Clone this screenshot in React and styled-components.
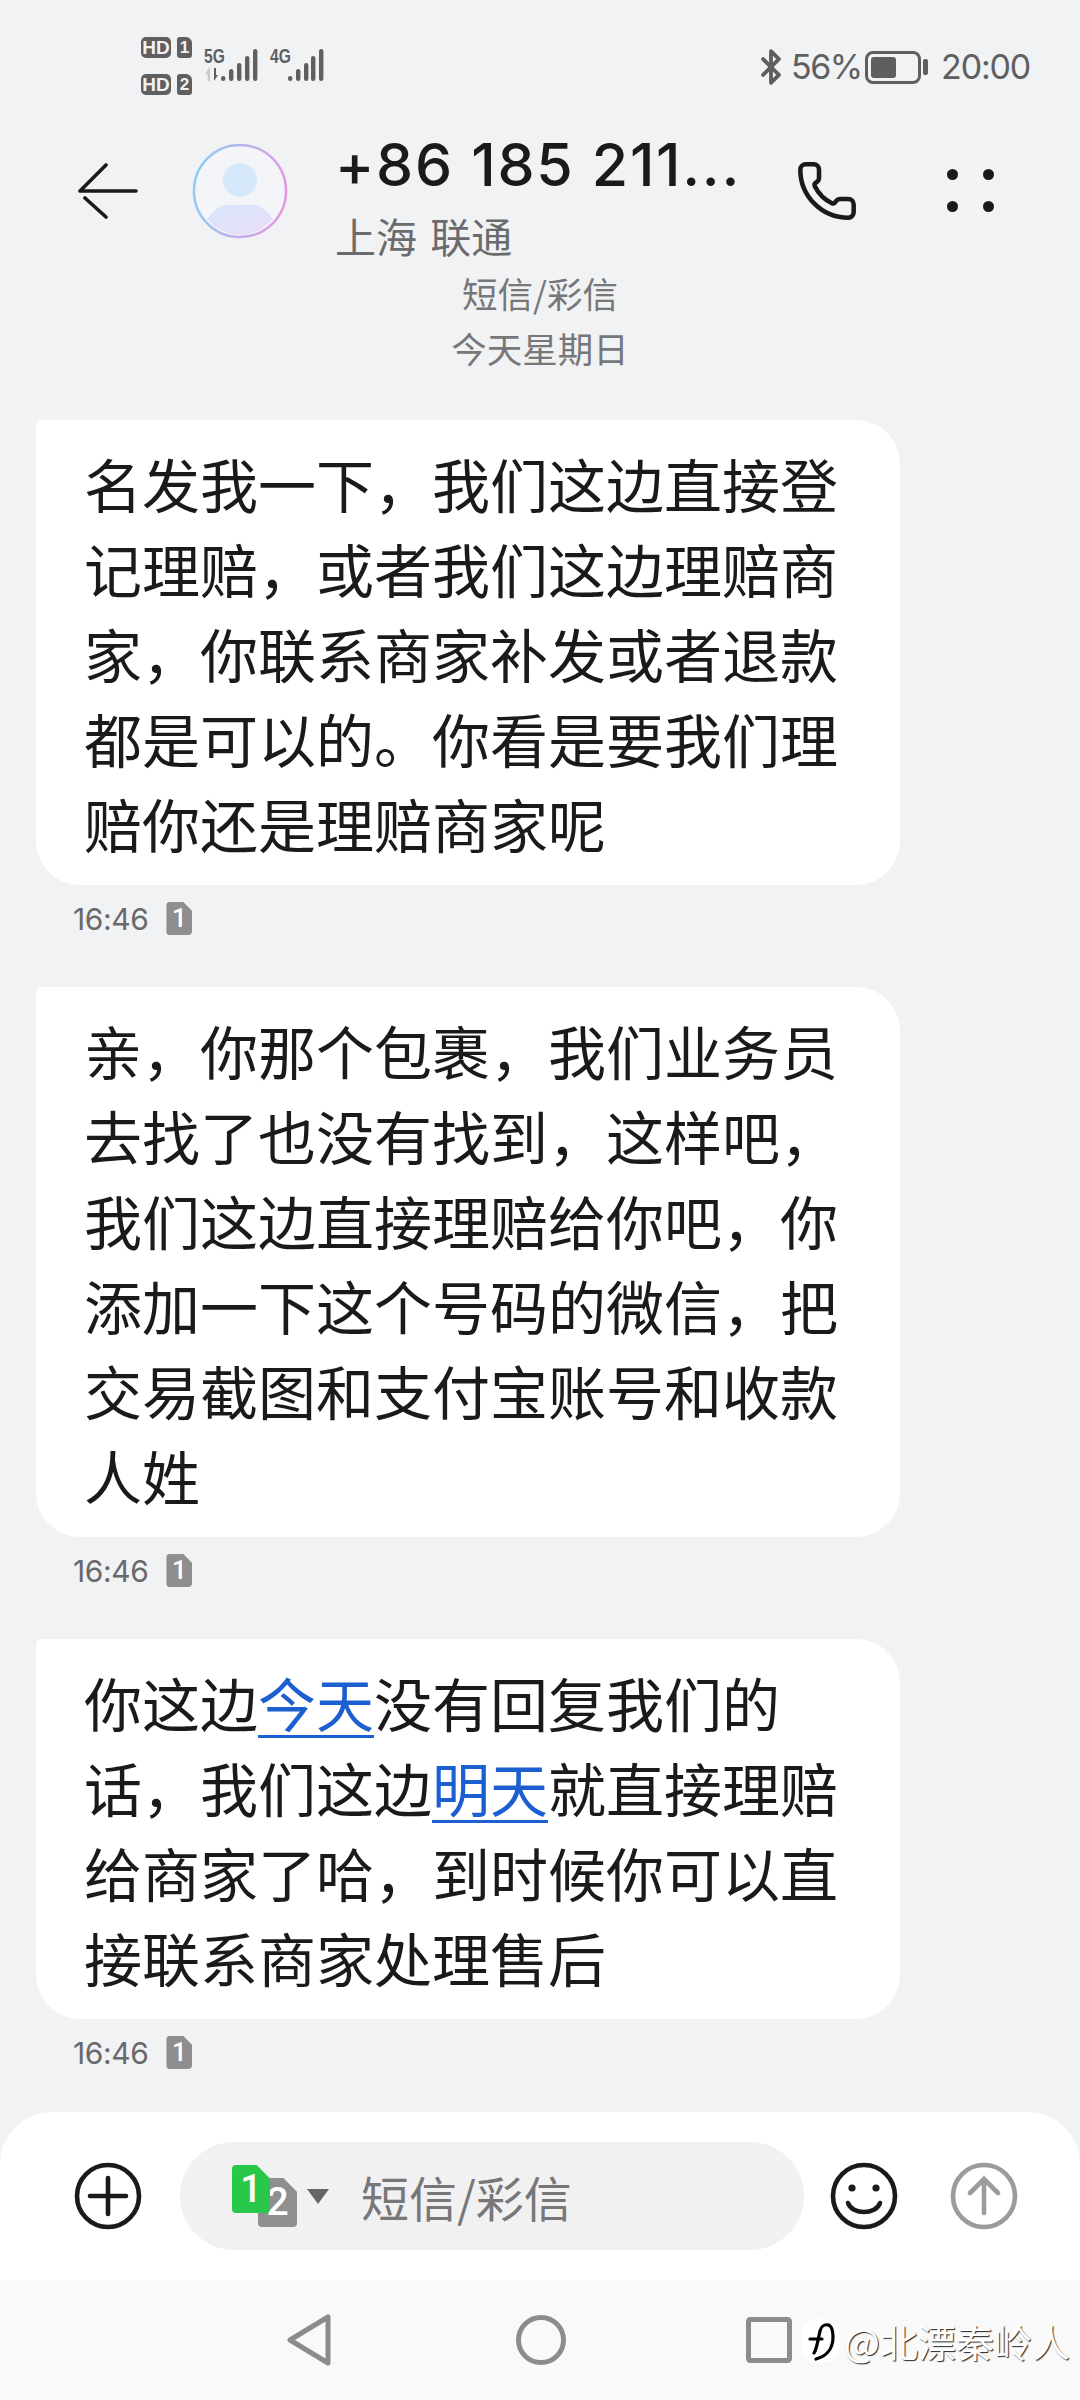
import React from 'react'
import styled, { createGlobalStyle } from 'styled-components'
import { Phone, Bluetooth } from 'lucide-react'

const Global = createGlobalStyle`
	html, body {
		margin: 0;
		padding: 0;
		background: #f1f2f4;
	}
	* {
		box-sizing: border-box;
	}
`

const CJK = `"Noto Sans CJK SC", "Noto Sans", sans-serif`
const LATIN = `Inter, Roboto, "Noto Sans CJK SC", sans-serif`

const Page = styled.div`
	position: relative;
	width: 1080px;
	height: 2400px;
	display: flex;
	flex-direction: column;
	background: #f1f2f4;
	overflow: hidden;
`

const StatusBar = styled.div`
	flex: none;
	height: 129px;
	padding: 37px 50px 0 141px;
	display: flex;
	align-items: flex-start;
`

const HdStack = styled.div`
	display: flex;
	flex-direction: column;
	gap: 16px;
`

const HdRow = styled.div`
	display: flex;
	gap: 6px;
`

const HdTag = styled.div`
	width: 30px;
	height: 21px;
	border-radius: 5px;
	background: #5f5f61;
	color: #f1f2f4;
	font: 700 19px/21px "Liberation Sans", sans-serif;
	text-align: center;
`

const HdSlot = styled(HdTag)`
	width: 15px;
	font-size: 17px;
	border-radius: 3px 6px 3px 3px;
`

const Network = styled.div`
	position: relative;
	margin-top: 11px;
	margin-left: 12px;
	display: flex;
	align-items: flex-end;
	height: 34px;
	padding-left: ${(p) => (p.$wide ? '18px' : '0')};
`

const NetLabel = styled.div`
	position: absolute;
	left: 0;
	top: -1px;
	font: 700 20px/18px "Liberation Sans", sans-serif;
	transform: scaleX(0.78);
	transform-origin: left;
	color: #5f5f61;
`

const StatusRight = styled.div`
	margin-left: auto;
	display: flex;
	align-items: center;
	height: 60px;
	color: #5f5f61;
`

const Percent = styled.div`
	font: 400 34px/40px ${LATIN};
	margin-left: 1px;
	letter-spacing: -1.5px;
	width: 74px;
`

const Battery = styled.div`
	width: 56px;
	height: 33px;
	border: 3px solid #5f5f61;
	border-radius: 8px;
	padding: 3px;
`

const BatteryFill = styled.div`
	width: 25px;
	height: 100%;
	background: #5f5f61;
	border-radius: 3px;
`

const BatteryNub = styled.div`
	width: 5px;
	height: 16px;
	margin-left: 2px;
	background: #5f5f61;
	border-radius: 2px;
`

const Clock = styled.div`
	font: 400 34px/40px ${LATIN};
	margin-left: 13px;
	letter-spacing: -1.2px;
`

const Header = styled.div`
	flex: none;
	height: 130px;
	padding-left: 78px;
	display: flex;
	align-items: center;
`

const BackIcon = styled.svg`
	flex: none;
	fill: none;
	stroke: #1a1a1a;
	stroke-width: 3.6;
	stroke-linecap: round;
	stroke-linejoin: round;
	margin-top: -6px;
`

const Avatar = styled.svg`
	flex: none;
	margin-left: 54px;
	margin-top: -6px;
`

const Contact = styled.div`
	margin-left: 47px;
	width: 460px;
	margin-top: 8px;
`

const Name = styled.div`
	font: 500 59px/66px ${LATIN};
	color: #1a1a1a;
	letter-spacing: 1.7px;
	white-space: nowrap;
	margin-top: 3px;
`

const Carrier = styled.div`
	font: 400 41px/64px ${CJK};
	color: #6b6b6d;
	word-spacing: 4px;
	white-space: nowrap;
	margin-top: 5px;
`

const CallIcon = styled(Phone)`
	flex: none;
	margin-top: -6px;
`

const MoreDots = styled.div`
	display: grid;
	grid-template-columns: 11px 11px;
	gap: 21px 25px;
	margin-left: 88px;
	margin-top: -8px;
`

const Dot = styled.span`
	width: 11px;
	height: 11px;
	border-radius: 50%;
	background: #1a1a1a;
`

const DayLabels = styled.div`
	flex: none;
	height: 161px;
	padding-top: 6px;
	text-align: center;
	font: 400 35.5px/55px ${CJK};
	color: #77777a;
`

const Thread = styled.div`
	padding-left: 36px;
	flex: 1;
	min-height: 0;
`

const Message = styled.div`
	margin-bottom: 51px;
`

const Bubble = styled.div`
	width: 864px;
	padding: 21px 0 19px 48px;
	background: #fff;
	border-radius: 6px 44px 44px 44px;
`

const Line = styled.div`
	font: 400 58px/85px ${CJK};
	color: #1a1a1a;
	white-space: nowrap;
`

const Link = styled.span`
	color: #1c5fd1;
	text-decoration: underline;
	text-decoration-thickness: 3px;
	text-underline-offset: 8px;
`

const Meta = styled.div`
	height: 51px;
	padding: 16px 0 0 37px;
	display: flex;
	align-items: center;
	gap: 18px;
`

const Time = styled.div`
	font: 400 30px/34px ${LATIN};
	color: #69696b;
	letter-spacing: -0.4px;
`

const SimBadge = styled.div`
	position: relative;
	z-index: ${(p) => (p.$front ? 1 : 0)};
	width: ${(p) => p.$size}px;
	height: ${(p) => Math.round(p.$size * 1.25)}px;
	border-radius: 4px;
	background: ${(p) => p.$color};
	clip-path: polygon(0 0, 65% 0, 100% 28%, 100% 100%, 0 100%);
	color: #fff;
	font: 500 ${(p) => Math.round(p.$size * 1)}px/${(p) => Math.round(p.$size * 1.25)}px Roboto, sans-serif;
	text-align: center;
`

const Composer = styled.div`
	flex: none;
	height: 168px;
	padding: 0 0 0 74px;
	display: flex;
	align-items: center;
	background: #fff;
	border-radius: 52px 52px 0 0;
`

const RoundIcon = styled.svg`
	flex: none;
	fill: none;
	stroke: ${(p) => p.$color};
	stroke-width: 4.6;
	stroke-linecap: round;
	margin-left: ${(p) => p.$gap || 0}px;
`

const InputPill = styled.div`
	width: 624px;
	height: 108px;
	margin: 0 26px 0 38px;
	padding-left: 52px;
	display: flex;
	align-items: center;
	border-radius: 54px;
	background: #f1f1f2;
`

const SimPair = styled.div`
	position: relative;
	width: 65px;
	height: 60px;
	margin-top: -2px;
`

const SimOffset = styled.div`
	position: absolute;
	left: 26px;
	top: 13px;
`

const Caret = styled.div`
	width: 0;
	height: 0;
	margin-left: 10px;
	border-left: 11px solid transparent;
	border-right: 11px solid transparent;
	border-top: 15px solid #666;
`

const Placeholder = styled.div`
	margin-left: 32px;
	font: 400 48px/60px ${CJK};
	color: #77777a;
	white-space: nowrap;
`

const NavBar = styled.div`
	flex: none;
	position: relative;
	height: 120px;
	padding-left: 287px;
	display: flex;
	align-items: center;
	background: #f9f9f9;
`

const NavIcon = styled.svg`
	flex: none;
	fill: none;
	stroke: #8c8c8c;
	stroke-width: 5;
	stroke-linejoin: round;
	margin-left: ${(p) => p.$gap || 0}px;
`

const Watermark = styled.div`
	position: absolute;
	left: 802px;
	top: 38px;
	display: flex;
	align-items: center;
	gap: 4px;
`

const LogoBlob = styled.div`
	width: 38px;
	height: 44px;
	display: flex;
	align-items: center;
	justify-content: center;
	background: #fff;
	border-radius: 14px 18px 18px 14px;
`

const WatermarkText = styled.div`
	font: 400 38px/46px ${CJK};
	color: #fff;
	white-space: nowrap;
	text-shadow: 1px 1px 1px rgba(0, 0, 0, 0.85);
`

const messages = [
	{
		lines: [
			'名发我一下，我们这边直接登',
			'记理赔，或者我们这边理赔商',
			'家，你联系商家补发或者退款',
			'都是可以的。你看是要我们理',
			'赔你还是理赔商家呢',
		],
	},
	{
		lines: [
			'亲，你那个包裹，我们业务员',
			'去找了也没有找到，这样吧，',
			'我们这边直接理赔给你吧，你',
			'添加一下这个号码的微信，把',
			'交易截图和支付宝账号和收款',
			'人姓',
		],
	},
	{
		lines: [
			<>
				你这边<Link>今天</Link>没有回复我们的
			</>,
			<>
				话，我们这边<Link>明天</Link>就直接理赔
			</>,
			'给商家了哈，到时候你可以直',
			'接联系商家处理售后',
		],
	},
]

function SignalBars({ xs, width, arrows }) {
	const tops = [27, 20, 14, 7, 0]
	return (
		<svg width={width} height='34' viewBox={`0 0 ${width} 34`}>
			{arrows && (
				<>
					<path d='M6 19 L1 26 H3.5 V33 H6 Z' fill='#c8c8ca' />
					<path d='M10 20 V33 L14 27 H12 V20 Z' fill='#5f5f61' />
				</>
			)}
			{xs.map((x, i) => (
				<rect
					key={x}
					x={x}
					y={tops[i] + 1}
					width='4.4'
					height={33 - tops[i] - 1}
					rx='2.2'
					fill='#5f5f61'
				/>
			))}
		</svg>
	)
}

function App() {
	return (
		<Page>
			<Global />
			<StatusBar>
				<HdStack>
					<HdRow>
						<HdTag>HD</HdTag>
						<HdSlot>1</HdSlot>
					</HdRow>
					<HdRow>
						<HdTag>HD</HdTag>
						<HdSlot>2</HdSlot>
					</HdRow>
				</HdStack>
				<Network>
					<NetLabel>5G</NetLabel>
					<SignalBars arrows width={54} xs={[17, 25, 33, 41, 49]} />
				</Network>
				<Network $wide>
					<NetLabel>4G</NetLabel>
					<SignalBars width={36} xs={[0, 8, 16, 23, 31]} />
				</Network>
				<StatusRight>
					<Bluetooth size={38} strokeWidth={2.4} color='#5f5f61' />
					<Percent>56%</Percent>
					<Battery>
						<BatteryFill />
					</Battery>
					<BatteryNub />
					<Clock>20:00</Clock>
				</StatusRight>
			</StatusBar>

			<Header>
				<BackIcon width='60' height='56' viewBox='0 0 60 56'>
					<path d='M28 2 L2 28 H58 M7 35 L28 54' />
				</BackIcon>
				<Avatar width='96' height='96' viewBox='0 0 96 96'>
					<defs>
						<linearGradient id='ring' x1='0' y1='0.4' x2='1' y2='0.6'>
							<stop offset='0' stopColor='#8fcdf2' />
							<stop offset='1' stopColor='#e596e4' />
						</linearGradient>
						<linearGradient id='fill' x1='0' y1='0' x2='1' y2='1'>
							<stop offset='0' stopColor='#d6e8fc' />
							<stop offset='1' stopColor='#ecdcfa' />
						</linearGradient>
					</defs>
					<circle cx='48' cy='48' r='46' fill='#f4f5f8' stroke='url(#ring)' strokeWidth='2.5' />
					<circle cx='48' cy='37' r='17' fill='#d6e8fc' />
					<path
						d='M31 62 H65 C73 66 78 72 81 76 C72 87 60 92 48 92 C36 92 24 87 15 76 C18 72 23 66 31 62 Z'
						fill='url(#fill)'
					/>
				</Avatar>
				<Contact>
					<Name>+86 185 211...</Name>
					<Carrier>上海 联通</Carrier>
				</Contact>
				<CallIcon size={64} strokeWidth={1.7} color='#1a1a1a' />
				<MoreDots>
					<Dot />
					<Dot />
					<Dot />
					<Dot />
				</MoreDots>
			</Header>

			<DayLabels>
				<div>短信/彩信</div>
				<div>今天星期日</div>
			</DayLabels>

			<Thread>
				{messages.map((message, i) => (
					<Message key={i}>
						<Bubble>
							{message.lines.map((line, j) => (
								<Line key={j}>{line}</Line>
							))}
						</Bubble>
						<Meta>
							<Time>16:46</Time>
							<SimBadge $size={26} $color='#8e8e8e'>1</SimBadge>
						</Meta>
					</Message>
				))}
			</Thread>

			<Composer>
				<RoundIcon width='68' height='68' viewBox='0 0 68 68' $color='#1a1a1a'>
					<circle cx='34' cy='34' r='31' />
					<path d='M34 16 V52 M16 34 H52' />
				</RoundIcon>
				<InputPill>
					<SimPair>
						<SimBadge $size={38} $color='#2ac84a' $front>1</SimBadge>
						<SimOffset>
							<SimBadge $size={39} $color='#8f8f8f'>2</SimBadge>
						</SimOffset>
					</SimPair>
					<Caret />
					<Placeholder>短信/彩信</Placeholder>
				</InputPill>
				<RoundIcon width='68' height='68' viewBox='0 0 68 68' $color='#1a1a1a'>
					<circle cx='34' cy='34' r='31' />
					<circle cx='22' cy='26' r='3.6' fill='#1a1a1a' stroke='none' />
					<circle cx='46' cy='26' r='3.6' fill='#1a1a1a' stroke='none' />
					<path d='M18 41 C22 53 46 53 50 41' />
				</RoundIcon>
				<RoundIcon width='68' height='68' viewBox='0 0 68 68' $color='#9b9b9b' $gap={52}>
					<circle cx='34' cy='34' r='31' />
					<path d='M34 51 V17 M20 31 L34 17 L48 31' />
				</RoundIcon>
			</Composer>

			<NavBar>
				<NavIcon width='44' height='52' viewBox='0 0 44 52'>
					<path d='M41 3 V49 L3 26 Z' />
				</NavIcon>
				<NavIcon width='50' height='52' viewBox='0 0 50 52' $gap={185}>
					<circle cx='25' cy='26' r='22.5' />
				</NavIcon>
				<NavIcon width='46' height='46' viewBox='0 0 46 46' $gap={180}>
					<rect x='2.5' y='2.5' width='41' height='41' rx='2' />
				</NavIcon>
				<Watermark>
					<LogoBlob>
						<svg width='30' height='44' viewBox='0 0 30 44'>
							<path
								d='M4 20 H16 M8 34 C11 30 12 20 14 12 C15 8 18 5 22 6 M10 40 C18 38 27 32 27 18 C27 12 26 8 23 6'
								fill='none'
								stroke='#000'
								strokeWidth='3.2'
								strokeLinecap='round'
							/>
						</svg>
					</LogoBlob>
					<WatermarkText>@北漂秦岭人</WatermarkText>
				</Watermark>
			</NavBar>
		</Page>
	)
}

export default App
